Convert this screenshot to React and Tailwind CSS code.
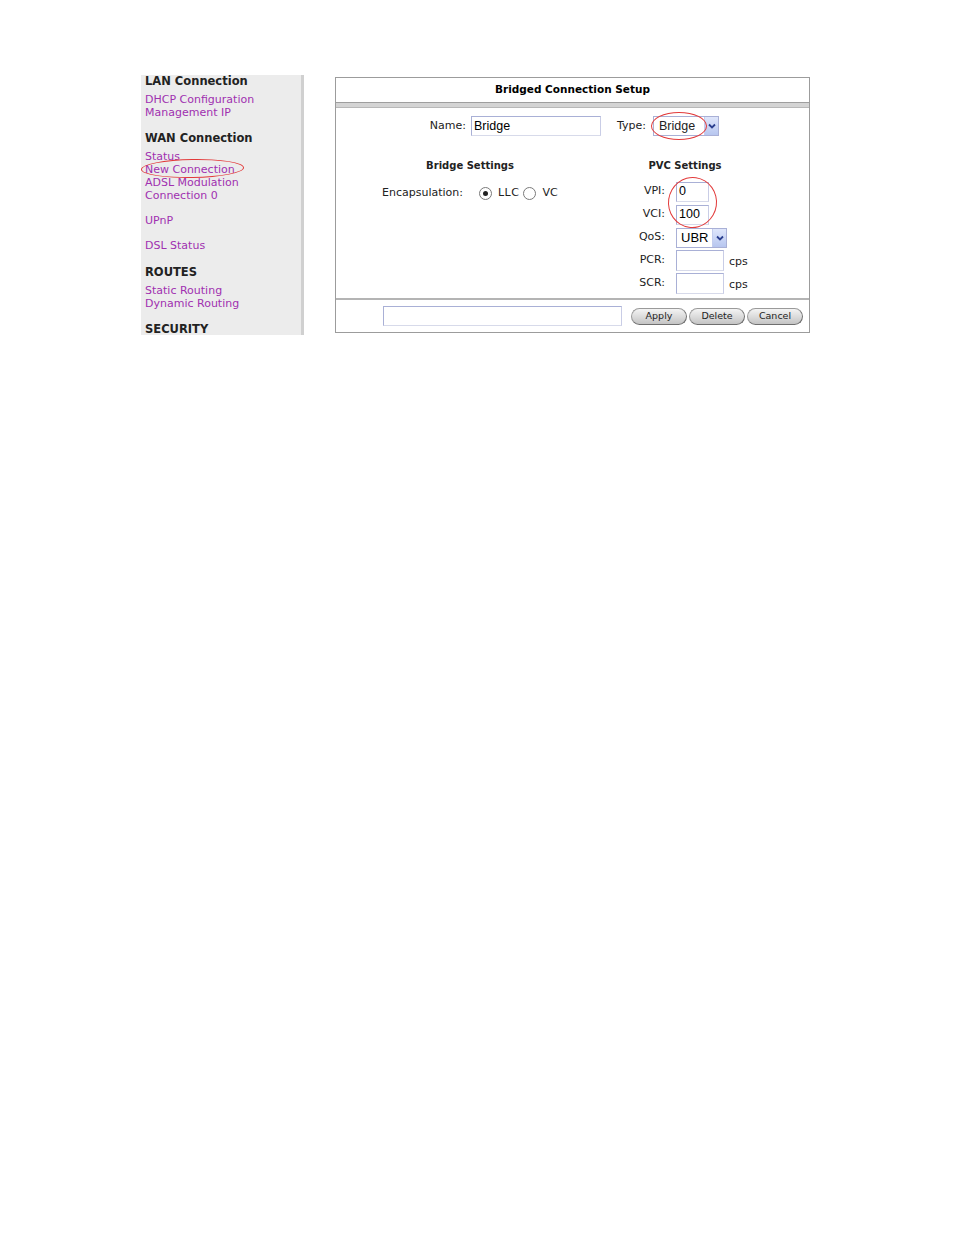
import React from "react";

const verdana = { fontFamily: '"DejaVu Sans", Verdana, sans-serif' };
const arial = { fontFamily: '"Liberation Sans", Arial, sans-serif' };

const SideHeading = ({ children, className = "" }) => (
  <div className={`font-bold text-[11.5px] leading-[13px] text-[#222] ${className}`}>{children}</div>
);

const SideLink = ({ children }) => (
  <div className="text-[11px] leading-[13px] text-[#a030b0]">{children}</div>
);

const Arrow = () => (
  <span className="flex h-full w-[14px] items-center justify-center bg-gradient-to-b from-[#dfe6fb] to-[#b7c6ef] border-l border-[#c3cdee]">
    <svg width="8" height="6" viewBox="0 0 8 6">
      <path d="M1 1.5 L4 4.5 L7 1.5" fill="none" stroke="#2b3f8f" strokeWidth="1.8" />
    </svg>
  </span>
);

const TextBox = ({ value = "", className = "" }) => (
  <div
    className={`flex items-center h-[20px] bg-white border border-[#a9b0d6] border-b-[#d7daea] border-r-[#c9cde6] pl-[2px] text-[12.5px] text-black ${className}`}
    style={arial}
  >
    {value}
  </div>
);

const Radio = ({ checked }) => (
  <span className="flex h-[13px] w-[13px] items-center justify-center rounded-full border border-[#7a7a7a] bg-white">
    {checked && <span className="h-[5px] w-[5px] rounded-full bg-[#222]" />}
  </span>
);

const PillButton = ({ children }) => (
  <div className="flex h-[17px] w-[56px] items-center justify-center rounded-full border border-[#9a9a9a] border-r-[#6f6f6f] border-b-[#6f6f6f] bg-gradient-to-b from-[#f4f4f4] via-[#dcdcdc] to-[#c4c4c4] text-[9.5px] text-[#222]">
    {children}
  </div>
);

const PvcRow = ({ label, children }) => (
  <div className="flex h-[23px] items-center">
    <div className="w-[62px] pr-[1px] text-right text-[11px] text-[#222]">{label}</div>
    <div className="ml-[10px] flex items-center">{children}</div>
  </div>
);

export default function App() {
  return (
    <div className="w-[954px] h-[1235px] bg-white" style={verdana}>
      <div className="flex items-start pt-[75px] pl-[141px]">
        {/* left menu */}
        <div className="w-[163px] h-[260px] overflow-hidden bg-[#ececec] border-r-[3px] border-[#d0d0d0] pl-[4px]">
          <SideHeading>LAN Connection</SideHeading>
          <div className="mt-[5px]">
            <SideLink>DHCP Configuration</SideLink>
            <SideLink>Management IP</SideLink>
          </div>
          <SideHeading className="mt-[13px]">WAN Connection</SideHeading>
          <div className="mt-[5px]">
            <SideLink>Status</SideLink>
            <div className="relative">
              <SideLink>New Connection</SideLink>
              <span className="absolute left-[-4px] top-[-4px] h-[19px] w-[103px] rounded-[50%] border border-[#e23a3a] -rotate-1" />
            </div>
            <SideLink>ADSL Modulation</SideLink>
            <SideLink>Connection 0</SideLink>
          </div>
          <div className="mt-[12px]">
            <SideLink>UPnP</SideLink>
          </div>
          <div className="mt-[12px]">
            <SideLink>DSL Status</SideLink>
          </div>
          <SideHeading className="mt-[14px]">ROUTES</SideHeading>
          <div className="mt-[5px]">
            <SideLink>Static Routing</SideLink>
            <SideLink>Dynamic Routing</SideLink>
          </div>
          <SideHeading className="mt-[13px]">SECURITY</SideHeading>
        </div>

        {/* setup panel */}
        <div className="ml-[31px] mt-[2px] w-[475px] h-[256px] border border-[#9c9c9c] flex flex-col">
          <div className="flex h-[24px] items-center justify-center text-[10.5px] font-bold text-black">
            Bridged Connection Setup
          </div>
          <div className="h-[6px] border-t border-[#9e9e9e] border-b border-b-[#b8b8b8] bg-[#d4d4d4]" />

          <div className="flex-1">
            {/* name / type */}
            <div className="mt-[8px] flex h-[20px] items-center text-[11px] text-[#222]">
              <div className="w-[130px] text-right">Name:</div>
              <TextBox value="Bridge" className="ml-[5px] w-[130px]" />
              <div className="ml-[16px] w-[32px]">Type:</div>
              <div className="relative ml-[4px]">
                <div className="flex h-[20px] w-[66px] items-center border border-[#a9b0d6] bg-white text-[12.5px]" style={arial}>
                  <span className="flex-1 pl-[5px]">Bridge</span>
                  <Arrow />
                </div>
                <span className="absolute left-[-2px] top-[-4px] h-[28px] w-[56px] rounded-[50%] border border-[#e23a3a]" />
              </div>
            </div>

            <div className="mt-[24px] flex">
              {/* bridge settings */}
              <div className="w-[268px]">
                <div className="h-[12px] text-center text-[10px] font-bold leading-[12px] text-[#222]">
                  Bridge Settings
                </div>
                <div className="mt-[13px] flex items-center pl-[46px] text-[11px] text-[#222]">
                  <span>Encapsulation:</span>
                  <span className="ml-[16px]"><Radio checked /></span>
                  <span className="ml-[6px] tracking-[0.5px]">LLC</span>
                  <span className="ml-[4px]"><Radio /></span>
                  <span className="ml-[6px]">VC</span>
                </div>
              </div>

              {/* pvc settings */}
              <div className="w-[162px]">
                <div className="h-[12px] text-center text-[10px] font-bold leading-[12px] text-[#222]">
                  PVC Settings
                </div>
                <div className="mt-[8px]">
                  <PvcRow label="VPI:">
                    <div className="relative">
                      <TextBox value="0" className="w-[33px]" />
                      <span className="absolute left-[-8px] top-[-5px] h-[51px] w-[49px] rounded-[50%] border border-[#e23a3a] rotate-[8deg]" />
                    </div>
                  </PvcRow>
                  <PvcRow label="VCI:">
                    <TextBox value="100" className="w-[33px]" />
                  </PvcRow>
                  <PvcRow label="QoS:">
                    <div className="flex h-[20px] w-[51px] items-center border border-[#a9b0d6] bg-white text-[13px]" style={arial}>
                      <span className="flex-1 pl-[4px]">UBR</span>
                      <Arrow />
                    </div>
                  </PvcRow>
                  <PvcRow label="PCR:">
                    <TextBox className="w-[48px] h-[21px]" />
                    <span className="ml-[5px] mt-[4px] text-[11px] text-[#222]">cps</span>
                  </PvcRow>
                  <PvcRow label="SCR:">
                    <TextBox className="w-[48px] h-[21px]" />
                    <span className="ml-[5px] mt-[4px] text-[11px] text-[#222]">cps</span>
                  </PvcRow>
                </div>
              </div>
            </div>
          </div>

          {/* footer */}
          <div className="h-[34px] border-t-2 border-[#b4b4b4] flex items-center">
            <TextBox className="ml-[47px] w-[239px] h-[19px]" />
            <div className="ml-[9px] flex gap-[2px]">
              <PillButton>Apply</PillButton>
              <PillButton>Delete</PillButton>
              <PillButton>Cancel</PillButton>
            </div>
          </div>
        </div>
      </div>
    </div>
  );
}
